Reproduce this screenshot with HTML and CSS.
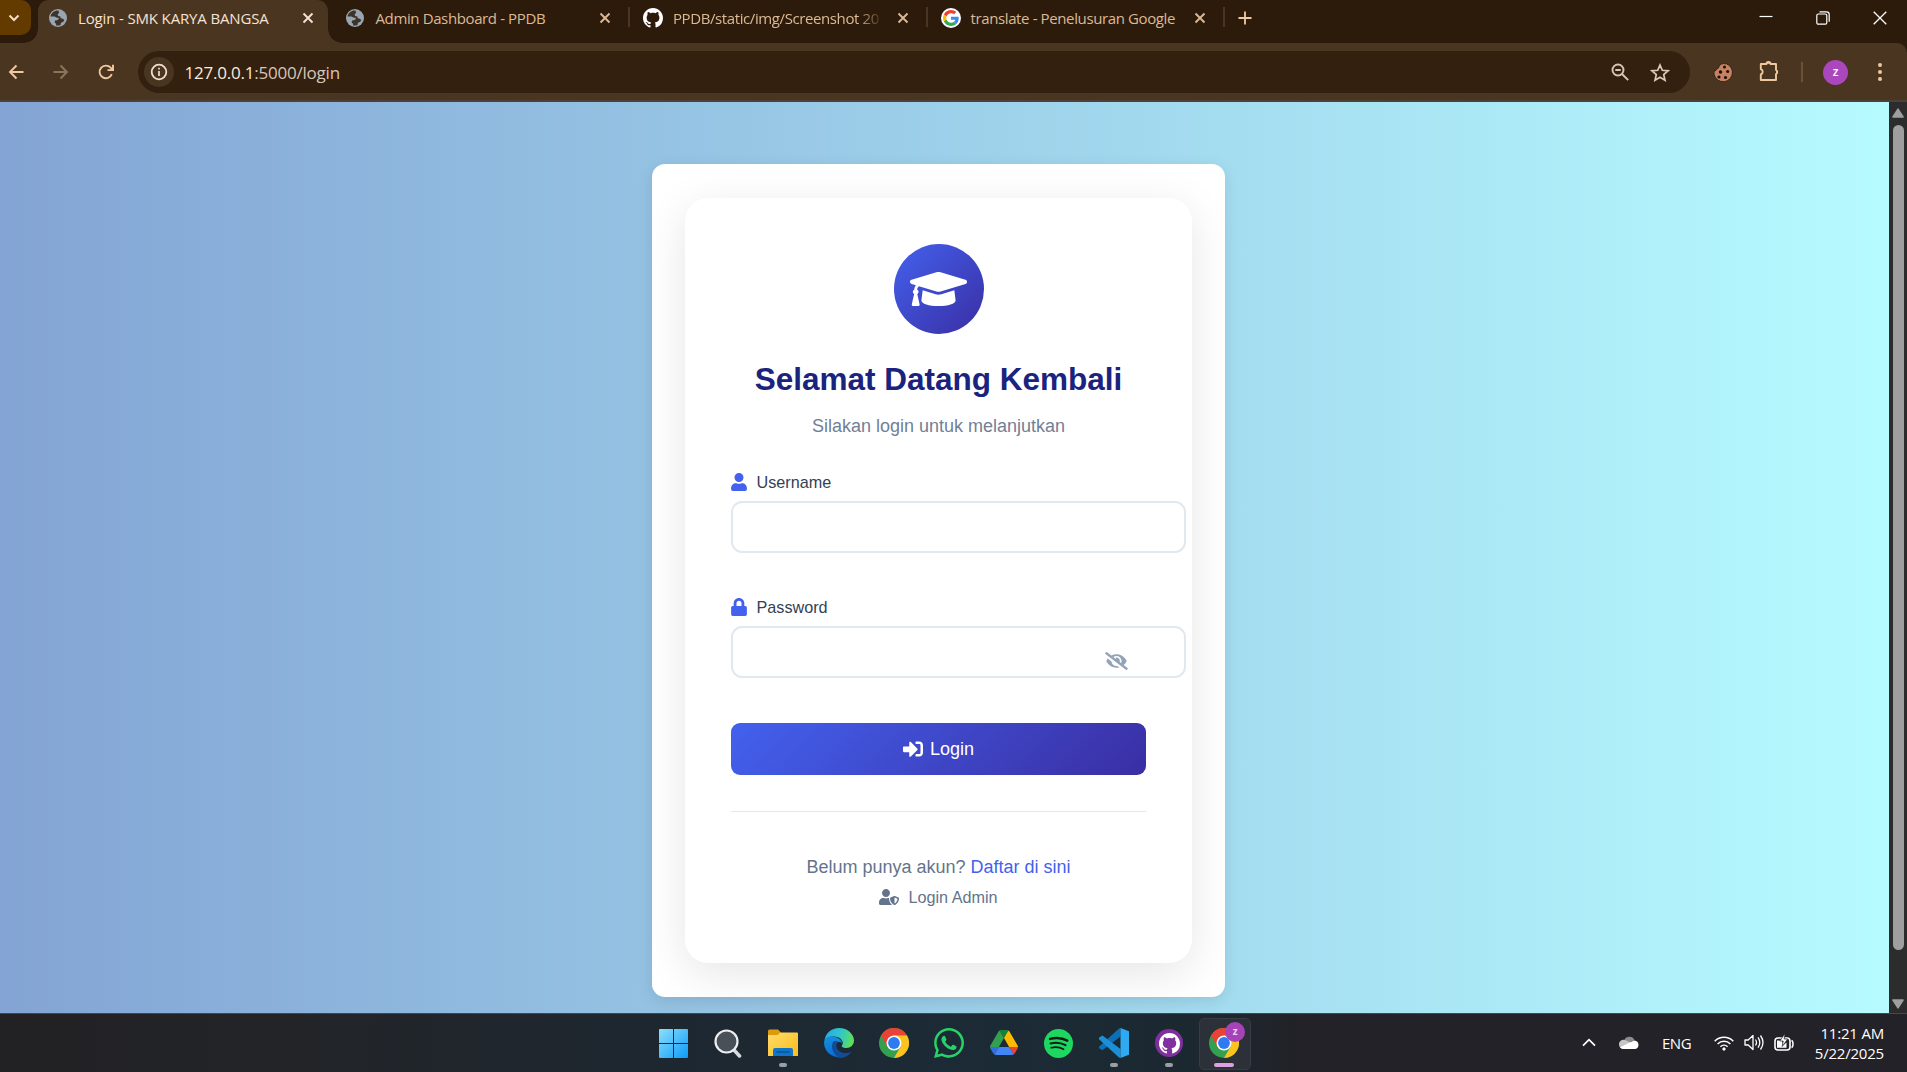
FILE: index.html
```html
<!DOCTYPE html>
<html lang="id">
<head>
<meta charset="utf-8">
<title>Login - SMK KARYA BANGSA</title>
<link rel="stylesheet" href="styles.css">
</head>
<body>
<svg class="defs" width="0" height="0" aria-hidden="true">
  <symbol id="globe" viewBox="0 0 18 18"><circle cx="9" cy="9" r="9" fill="#9aa5b3"/><path d="M9.500 1.500C5.500 1.200 2 4 1.500 7.500h4l2.300 1.200h1.700l.3 1.300-1.800 1.200-2 .3-.3 2 1.300 1.200.2 1.700c1.500.3 3 .2 4.300-.4l.5-2.200 2-.8 1.300-1.800-1.300-1.500-2.300-.5-.3-1.700-2.200-.5-.6-1.500 1.500-1.800z" fill="#3c3428"/></symbol>
  <symbol id="close" viewBox="0 0 12 12"><path d="M1.500 1.500l9 9M10.500 1.500l-9 9" fill="none" stroke="currentColor" stroke-width="1.900"/></symbol>
  <symbol id="octocat" viewBox="0 0 16 16"><path d="M8 0C3.58 0 0 3.58 0 8c0 3.54 2.29 6.53 5.47 7.59.4.07.55-.17.55-.38 0-.19-.01-.82-.01-1.49-2.01.37-2.53-.49-2.69-.94-.09-.23-.48-.94-.82-1.13-.28-.15-.68-.52-.01-.53.63-.01 1.08.58 1.23.82.72 1.21 1.87.87 2.33.66.07-.52.28-.87.51-1.07-1.78-.2-3.64-.89-3.64-3.95 0-.87.31-1.59.82-2.15-.08-.2-.36-1.02.08-2.12 0 0 .67-.21 2.2.82.64-.18 1.32-.27 2-.27s1.36.09 2 .27c1.53-1.04 2.2-.82 2.2-.82.44 1.100.16 1.920.08 2.120.51.56.82 1.270.82 2.150 0 3.070-1.870 3.750-3.650 3.950.29.25.54.73.54 1.480 0 1.070-.01 1.930-.01 2.200 0 .21.15.46.55.38A8.010 8.010 0 0 0 16 8c0-4.420-3.580-8-8-8z" fill="currentColor"/></symbol>
  <symbol id="chrome" viewBox="0 0 30 30">
    <circle cx="15" cy="15" r="15" fill="#34a04f"/>
    <path d="M2 7.500A15 15 0 0 1 28 7.500H15L8.500 18.750z" fill="#ea4335"/>
    <path d="M28 7.500A15 15 0 0 1 15 30L21.500 18.750 15 7.500z" fill="#fcc31e"/>
    <circle cx="15" cy="15" r="7.500" fill="#fff"/><circle cx="15" cy="15" r="5.900" fill="#2f7af0"/>
  </symbol>
</svg>

<header class="browser">
  <div class="tabstrip">
    <button class="tab-search"><svg width="12" height="8" viewBox="0 0 12 8"><path d="M1.500 1.500L6 6l4.500-4.500" fill="none" stroke="#f9dcc0" stroke-width="2"/></svg></button>
    <div class="tab active"><svg class="fav"><use href="#globe"/></svg><span class="title t1">Login - SMK KARYA BANGSA</span><svg class="x"><use href="#close"/></svg></div>
    <div class="tab second"><svg class="fav"><use href="#globe"/></svg><span class="title t2">Admin Dashboard - PPDB</span><svg class="x"><use href="#close"/></svg></div>
    <div class="tab"><svg class="fav big octo"><use href="#octocat"/></svg><span class="title t3">PPDB/static/img/Screenshot 20</span><svg class="x"><use href="#close"/></svg></div>
    <div class="tab"><span class="fav big google"><svg width="16" height="16" viewBox="0 0 48 48"><path fill="#EA4335" d="M24 9.500c3.540 0 6.710 1.220 9.210 3.600l6.850-6.850C35.900 2.380 30.470 0 24 0 14.620 0 6.510 5.380 2.560 13.220l7.980 6.190C12.430 13.720 17.740 9.500 24 9.500z"/><path fill="#4285F4" d="M46.980 24.550c0-1.570-.15-3.090-.38-4.550H24v9.020h12.940c-.58 2.960-2.260 5.480-4.780 7.180l7.730 6c4.510-4.180 7.090-10.360 7.090-17.650z"/><path fill="#FBBC05" d="M10.530 28.590c-.48-1.450-.76-2.990-.76-4.590s.27-3.140.76-4.590l-7.980-6.190C.92 16.460 0 20.120 0 24c0 3.880.92 7.540 2.560 10.780l7.970-6.190z"/><path fill="#34A853" d="M24 48c6.480 0 11.930-2.130 15.890-5.810l-7.730-6c-2.150 1.450-4.920 2.300-8.160 2.300-6.260 0-11.570-4.220-13.470-9.910l-7.980 6.190C6.510 42.620 14.620 48 24 48z"/></svg></span><span class="title t4">translate - Penelusuran Google</span><svg class="x"><use href="#close"/></svg></div>
    <svg class="plus" width="14" height="14" viewBox="0 0 14 14"><path d="M7 .5v13M.5 7h13" stroke="#f0c9a0" stroke-width="1.800"/></svg>
    <div class="win">
      <svg width="14" height="14" viewBox="0 0 14 14"><path d="M.5 5.500h13" stroke="#fff" stroke-width="1.200"/></svg>
      <svg width="14" height="14" viewBox="0 0 14 14" fill="none" stroke="#fff" stroke-width="1.200"><rect x=".8" y="3" width="10" height="10.200" rx="1.500"/><path d="M3.500.8h7a2.700 2.700 0 0 1 2.700 2.700v7.200"/></svg>
      <svg width="14" height="14" viewBox="0 0 14 14"><path d="M.7.700l12.600 12.600M13.300.700L.7 13.300" stroke="#fff" stroke-width="1.300"/></svg>
    </div>
  </div>
  <div class="toolbar">
    <div class="nav">
      <svg width="16" height="16" viewBox="0 0 16 16" fill="none" stroke="#f0c9a0" stroke-width="1.900"><path d="M15.500 8H2M8.500 1.500L2 8l6.500 6.500"/></svg>
      <svg width="16" height="16" viewBox="0 0 16 16" fill="none" stroke="#8d755c" stroke-width="1.900"><path d="M.5 8H14M7.500 1.500L14 8l-6.500 6.500"/></svg>
      <svg width="16" height="16" viewBox="0 0 16 16" fill="none" stroke="#f0c9a0" stroke-width="1.900"><path d="M13.800 10.200A6.300 6.300 0 1 1 12.600 3.700L14.500 5.800M15 .8v5.300H9.500"/></svg>
    </div>
    <div class="omnibox">
      <span class="info"><svg width="18" height="18" viewBox="0 0 18 18"><circle cx="9" cy="9" r="7.300" fill="none" stroke="#f0ddcd" stroke-width="1.800"/><path d="M9 8v5M9 4.800v1.800" stroke="#f0ddcd" stroke-width="1.700"/></svg></span>
      <span class="url"><b>127.0.0.1</b>:5000/login</span>
      <svg class="mag" width="18" height="18" viewBox="0 0 18 18" fill="none" stroke="#d9c7b6" stroke-width="1.900"><circle cx="7" cy="7" r="5.500"/><path d="M11 11l6.200 6.200M4.300 7h5.400"/></svg>
      <svg width="20" height="19" viewBox="0 0 20 19"><path d="M10 2l2.300 5.300 5.700.5-4.300 3.800 1.300 5.600-5-3-5 3 1.300-5.600L2 7.800l5.700-.5z" fill="none" stroke="#dccab9" stroke-width="1.700"/></svg>
    </div>
    <svg class="cookie" width="20" height="21" viewBox="0 0 20 21"><path d="M8 1.500c1 1 2 .2 3-.3 1 .8 1 .8 2.500.6A9.300 9.300 0 1 1 1 9c1.600 0 2.500-.8 2.600-2.300C5.500 6.700 6.500 5 5.800 3.600 7 3.500 8 2.900 8 1.500z" fill="#c58160" stroke="#2c1b10" stroke-width=".9"/><g fill="#19100b"><circle cx="11.500" cy="5" r="1.500"/><circle cx="7.500" cy="10" r="1.700"/><circle cx="14.700" cy="9.600" r="1.500"/><circle cx="6" cy="15" r="1.600"/><circle cx="12.500" cy="15.500" r="1.600"/></g></svg>
    <svg class="puzzle" width="21" height="22" viewBox="0 0 21 22"><path d="M2 4h5.500a2 2 0 0 1 4 0H17v6a2.200 2.200 0 0 1 0 4v6H1.800v-5.500a2.800 2.800 0 0 0 0-5.300V4z" fill="none" stroke="#efc8a0" stroke-width="1.900" stroke-linejoin="round"/><path d="M7.200 3.800a2.200 2.200 0 0 1 4.600 0zM17.200 9.800a2.300 2.300 0 0 1 0 4.400z" fill="#efc8a0"/></svg>
    <i class="bar"></i>
    <span class="avatar">z</span>
    <svg class="dots" width="4" height="18" viewBox="0 0 4 18" fill="#f0c9a0"><circle cx="2" cy="2" r="2"/><circle cx="2" cy="9" r="2"/><circle cx="2" cy="16" r="2"/></svg>
  </div>
</header>

<div class="viewport">
  <main class="page">
    <div class="shell">
      <section class="card">
        <div class="logo"><svg width="57" height="46" viewBox="0 0 640 512"><path fill="#fff" d="M622.340 153.200L343.400 67.500c-15.200-4.670-31.600-4.670-46.790 0L17.660 153.200c-23.540 7.230-23.540 38.360 0 45.590l48.630 14.940c-10.670 13.190-17.230 29.280-17.880 46.900C38.780 266.150 32 276.110 32 288c0 10.780 5.680 19.850 13.860 25.650L20.330 428.530C18.110 438.520 25.710 448 35.940 448h56.110c10.240 0 17.840-9.480 15.620-19.470L82.140 313.650C90.320 307.850 96 298.780 96 288c0-11.570-6.470-21.250-15.660-26.870.76-15.020 8.440-28.300 20.690-36.720L296.600 284.500c9.060 2.780 26.440 6.250 46.790 0l278.950-85.700c23.550-7.240 23.550-38.360 0-45.600zM352.790 315.090c-28.530 8.760-52.840 3.920-65.590 0l-145.020-44.550L128 384c0 35.350 85.960 64 192 64s192-28.650 192-64l-14.180-113.470-145.030 44.560z"/></svg></div>
        <h1>Selamat Datang Kembali</h1>
        <p class="sub">Silakan login untuk melanjutkan</p>
        <form>
          <div class="field">
            <label for="u"><svg width="16" height="18" viewBox="0 0 448 512"><path d="M224 256c70.700 0 128-57.300 128-128S294.700 0 224 0 96 57.300 96 128s57.300 128 128 128zm89.600 32h-16.700c-22.200 10.200-46.900 16-72.900 16s-50.600-5.800-72.900-16h-16.700C60.200 288 0 348.200 0 422.400V464c0 26.500 21.500 48 48 48h352c26.500 0 48-21.500 48-48v-41.600c0-74.200-60.200-134.400-134.400-134.400z"/></svg>Username</label>
            <input id="u" type="text">
          </div>
          <div class="field">
            <label for="p"><svg width="16" height="18" viewBox="0 0 448 512"><path d="M400 224h-24v-72C376 68.200 307.800 0 224 0S72 68.200 72 152v72H48c-26.500 0-48 21.500-48 48v192c0 26.500 21.500 48 48 48h352c26.500 0 48-21.500 48-48V272c0-26.500-21.500-48-48-48zm-104 0H152v-72c0-39.700 32.300-72 72-72s72 32.300 72 72v72z"/></svg>Password</label>
            <input id="p" type="password">
            <svg class="eye" width="23" height="18" viewBox="0 0 640 512"><path d="M320 400c-75.850 0-137.250-58.710-142.900-133.110L72.200 185.820c-13.790 17.300-26.480 35.590-36.720 55.590a32.350 32.350 0 0 0 0 29.190C89.710 376.410 197.070 448 320 448c26.910 0 52.870-4 77.890-10.460L346 397.390a144.130 144.130 0 0 1-26 2.610zm313.820 58.100l-110.550-85.440a331.250 331.250 0 0 0 81.250-102.070 32.350 32.350 0 0 0 0-29.190C550.290 135.590 442.930 64 320 64a308.150 308.150 0 0 0-147.320 37.700L45.460 3.370A16 16 0 0 0 23 6.180L3.370 31.450A16 16 0 0 0 6.180 53.900l588.360 454.730a16 16 0 0 0 22.460-2.810l19.640-25.270a16 16 0 0 0-2.820-22.450zm-183.720-142l-39.300-30.380A94.750 94.750 0 0 0 416 256a94.760 94.760 0 0 0-121.310-92.210A47.650 47.650 0 0 1 304 192a46.640 46.640 0 0 1-1.540 10l-73.610-56.890A142.310 142.310 0 0 1 320 112a143.920 143.920 0 0 1 144 144c0 21.630-5.290 41.790-13.900 60.110z"/></svg>
          </div>
          <button class="login" type="button"><svg width="20" height="20" viewBox="0 0 512 512"><path d="M416 448h-84c-6.600 0-12-5.400-12-12v-40c0-6.600 5.400-12 12-12h84c17.700 0 32-14.300 32-32V160c0-17.700-14.300-32-32-32h-84c-6.600 0-12-5.400-12-12V76c0-6.600 5.400-12 12-12h84c53 0 96 43 96 96v192c0 53-43 96-96 96zm-47-201L201 79c-15-15-41-4.500-41 17v96H24c-13.300 0-24 10.700-24 24v96c0 13.300 10.700 24 24 24h136v96c0 21.500 26 32 41 17l168-168c9.300-9.400 9.300-24.600 0-34z"/></svg>Login</button>
        </form>
        <footer class="links">
          <p>Belum punya akun? <a href="#">Daftar di sini</a></p>
          <a class="admin" href="#"><svg width="20" height="16" viewBox="0 0 640 512"><path d="M622.300 271.100l-115.200-45c-4.100-1.600-12.600-3.700-22.200 0l-115.200 45c-10.700 4.200-17.700 14-17.700 24.900 0 111.600 68.700 188.800 132.900 213.900 9.600 3.700 18 1.600 22.200 0C558.400 489.900 640 420.500 640 296c0-10.900-7-20.700-17.700-24.900zM496 462.400V273.300l95.500 37.300c-5.600 87.100-60.900 135.400-95.500 151.800zM224 256c70.700 0 128-57.300 128-128S294.700 0 224 0 96 57.300 96 128s57.300 128 128 128zm96 40c0-2.500.8-4.800 1.100-7.200-2.500-.1-4.900-.8-7.500-.8h-16.700c-22.200 10.200-46.900 16-72.900 16s-50.600-5.800-72.900-16h-16.700C60.200 288 0 348.200 0 422.400V464c0 26.500 21.500 48 48 48h352c6.800 0 13.300-1.500 19.200-4-54-42.900-99.200-116.700-99.200-212z"/></svg>Login Admin</a>
        </footer>
      </section>
    </div>
  </main>
  <div class="scrollbar">
    <svg width="12" height="10" viewBox="0 0 12 10"><path d="M6 1.200L11 9H1z" fill="#9f9f9f" stroke="#9f9f9f" stroke-width="1.600" stroke-linejoin="round"/></svg>
    <i class="thumb"></i>
    <svg class="down" width="12" height="10" viewBox="0 0 12 10"><path d="M6 8.800L1 1h10z" fill="#9f9f9f" stroke="#9f9f9f" stroke-width="1.600" stroke-linejoin="round"/></svg>
  </div>
</div>

<footer class="taskbar">
  <nav class="apps">
    <span class="app"><svg width="29" height="29" viewBox="0 0 29 29"><defs><linearGradient id="wn" x2="1" y2="1"><stop stop-color="#8be0fb"/><stop offset="1" stop-color="#0c9bf8"/></linearGradient></defs><path d="M1 0h13v14H0V1a1 1 0 0 1 1-1zM15 0h13a1 1 0 0 1 1 1v13H15zM0 15h14v14H1a1 1 0 0 1-1-1zM15 15h14v13a1 1 0 0 1-1 1H15z" fill="url(#wn)"/></svg></span>
    <span class="app"><svg width="28" height="29" viewBox="0 0 28 29"><path d="M20 21l5.500 6" stroke="#d5dae0" stroke-width="3.500" stroke-linecap="round"/><circle cx="12.500" cy="12.500" r="11" fill="#4a5058" stroke="#eceef0" stroke-width="2.200"/></svg></span>
    <span class="app run"><svg width="30" height="28" viewBox="0 0 30 28"><defs><linearGradient id="fd" x2="1" y2="1"><stop stop-color="#ffdc6c"/><stop offset="1" stop-color="#fbbc18"/></linearGradient></defs><path d="M0 2a1.500 1.500 0 0 1 1.500-1.500H10L13 3.500v4H0z" fill="#dd9a0c"/><path d="M0 6h9.500l3-2.500H29q1 0 1 1V27H0z" fill="url(#fd)"/><path d="M5 27v-6q0-2 2-2h16q2 0 2 2v6z" fill="#0f75c9"/><path d="M8.500 23h13" stroke="#0a4b8c" stroke-width="1.200"/></svg></span>
    <span class="app"><svg width="30" height="30" viewBox="0 0 30 30"><defs><linearGradient id="e1" x1="0" y1=".3" x2="1" y2=".5"><stop stop-color="#28a8e8"/><stop offset=".55" stop-color="#31c8c6"/><stop offset="1" stop-color="#60e055"/></linearGradient><linearGradient id="e2" x2=".3" y2="1"><stop stop-color="#1592df"/><stop offset="1" stop-color="#0a6fd0"/></linearGradient></defs><path d="M.3 13C1.500 5 7.500 0 15 0c9 0 15 6.500 15 12.500 0 4.500-3.500 7.500-7.500 7.500-3.500 0-5.500-1.200-4.500-2.800 2-2.200 0-7.700-6-8.500C6 8 1.500 10 .3 13z" fill="url(#e1)"/><path d="M0 15c0-5 5-7.500 9.500-6.500 5 .8 8.500 3.500 8.500 7-2-2.500-7-2-7 3.500 0 6 6 9.500 10 9A15 15 0 0 1 0 15z" fill="url(#e2)"/><path d="M10 13c-3.500 3-3 12 5.500 17 5 .2 9.500-2.500 12-6.500-7 3.500-14 .5-15-5-.3-2.500.8-4.500 2-5z" fill="#114c98"/></svg></span>
    <span class="app"><svg width="30" height="30"><use href="#chrome"/></svg></span>
    <span class="app"><svg width="30" height="30" viewBox="0 32 448 448"><path fill="#25d366" d="M380.900 97.100C339 55.100 283.200 32 223.900 32c-122.400 0-222 99.600-222 222 0 39.100 10.200 77.300 29.600 111L0 480l117.700-30.900c32.400 17.700 68.900 27 106.100 27h.1c122.300 0 224.100-99.600 224.100-222 0-59.300-25.200-115-67.100-157zm-157 341.600c-33.200 0-65.700-8.900-94-25.700l-6.700-4-69.800 18.300L72 359.200l-4.400-7c-18.500-29.400-28.200-63.300-28.200-98.200 0-101.700 82.800-184.500 184.600-184.500 49.300 0 95.600 19.200 130.400 54.100 34.800 34.900 56.200 81.200 56.100 130.500 0 101.800-84.900 184.600-186.600 184.600zm101.200-138.200c-5.500-2.800-32.800-16.200-37.900-18-5.100-1.900-8.800-2.800-12.500 2.800-3.700 5.600-14.300 18-17.600 21.800-3.200 3.700-6.500 4.200-12 1.400-32.600-16.300-54-29.100-75.500-66-5.700-9.800 5.700-9.100 16.300-30.300 1.800-3.700.9-6.900-.5-9.700-1.400-2.800-12.500-30.100-17.100-41.200-4.500-10.800-9.100-9.300-12.500-9.500-3.200-.2-6.900-.2-10.600-.2-3.700 0-9.700 1.400-14.800 6.900-5.100 5.600-19.400 19-19.400 46.300 0 27.300 19.900 53.700 22.600 57.400 2.800 3.700 39.100 59.700 94.800 83.800 35.200 15.200 49 16.500 66.600 13.900 10.700-1.600 32.800-13.400 37.400-26.400 4.600-13 4.600-24.100 3.200-26.400-1.300-2.500-5-3.900-10.500-6.600z"/></svg></span>
    <span class="app"><svg class="drive" width="28" height="25" viewBox="0 0 87.300 78"><path d="m6.600 66.850 3.850 6.650c.8 1.400 1.950 2.500 3.300 3.300l13.750-23.800h-27.500c0 1.550.4 3.100 1.200 4.500z" fill="#2f6fe0"/><path d="m43.650 25-13.750-23.800c-1.350.8-2.500 1.900-3.300 3.300l-25.400 44a9.060 9.060 0 0 0 -1.200 4.500h27.500z" fill="#34a04f"/><path d="m73.550 76.800c1.350-.8 2.500-1.900 3.300-3.300l1.600-2.750 7.650-13.250c.8-1.400 1.200-2.950 1.200-4.500h-27.500l5.850 11.500z" fill="#ea4335"/><path d="m43.650 25 13.750-23.800c-1.350-.8-2.900-1.200-4.500-1.200h-18.500c-1.600 0-3.150.45-4.500 1.200z" fill="#188038"/><path d="m59.800 53h-32.300l-13.750 23.800c1.350.8 2.900 1.200 4.500 1.200h50.800c1.600 0 3.150-.45 4.500-1.200z" fill="#4285f4"/><path d="m73.400 26.500-12.700-22c-.8-1.400-1.950-2.500-3.300-3.300l-13.750 23.800 16.150 28h27.450c0-1.550-.4-3.100-1.200-4.500z" fill="#ffba00"/></svg></span>
    <span class="app"><svg width="29" height="29" viewBox="0 0 24 24"><circle cx="12" cy="12" r="12" fill="#1ed760"/><g fill="none" stroke="#111c18" stroke-linecap="round"><path d="M5 8.200c4.700-1.300 10.300-.8 14.300 1.400" stroke-width="2"/><path d="M5.400 12c4.200-1.200 8.800-.6 12.400 1.400" stroke-width="1.700"/><path d="M5.900 15.500c3.600-.9 7.300-.5 10.300 1.300" stroke-width="1.400"/></g></svg></span>
    <span class="app run"><svg width="30" height="30" viewBox="0 0 30 30"><path d="M21.500 0v8.500L3.500 22.200 0 20.300v-1.600L20 .6z" fill="#0c6fb8"/><path d="M0 9.500L3.500 7.600l18 13.500V30l-1.500-.5L0 11.200z" fill="#1d8fd8"/><path d="M21.500 0L30 3.200v23.600L21.500 30z" fill="#2fa9f2"/></svg></span>
    <span class="app run"><span class="gh"><svg width="21" height="21"><use href="#octocat"/></svg></span></span>
    <span class="app current"><svg width="30" height="30"><use href="#chrome"/></svg><b class="badge">z</b></span>
  </nav>
  <div class="tray">
    <svg class="chev" width="14" height="9" viewBox="0 0 14 9"><path d="M1 7.700l6-6 6 6" fill="none" stroke="#fff" stroke-width="1.700"/></svg>
    <svg class="cloud" width="20" height="14" viewBox="0 0 20 14"><path d="M5 5a5.500 5.500 0 0 1 10.400-1L8 8z" fill="#8c8c8c"/><path d="M0 8.500A4.500 4.500 0 0 1 6.500 4.200L15 8l-9 5H4.500A4.500 4.500 0 0 1 0 8.500z" fill="#c6c6c6"/><path d="M13 5.500a4 4 0 0 1 2.600-1 4.400 4.400 0 0 1 1 8.500H4.500A4.500 4.500 0 0 1 1 11.200z" fill="#fff"/></svg>
    <span class="lang">ENG</span>
    <svg class="wifi" width="20" height="16" viewBox="0 0 20 16" fill="none" stroke="#fff" stroke-width="1.500"><path d="M.7 6.200a13 13 0 0 1 18.600 0M3.600 9a9 9 0 0 1 12.800 0M6.400 11.800a5.200 5.200 0 0 1 7.200 0"/><circle cx="10" cy="14" r="1.200" fill="#fff" stroke-width="1"/></svg>
    <svg class="spk" width="20" height="17" viewBox="0 0 20 17" fill="none" stroke="#fff" stroke-width="1.300"><path d="M1 6h3.200L9 1.500v14L4.200 11H1z" stroke-linejoin="round"/><path d="M11.500 5.500q2 3 0 6M14 3.300q3.600 5.200 0 10.400M16.500 1.500q5 7 0 14"/></svg>
    <svg class="bat" width="20" height="17" viewBox="0 0 20 17"><rect x="1" y="4" width="15" height="12" rx="3" fill="none" stroke="#fff" stroke-width="1.600"/><path d="M17.500 6.500q1.500.5 1.500 3.500t-1.500 3.500" fill="none" stroke="#fff" stroke-width="1.500"/><path d="M3 13.800V6.500h5l1 5 3.500-3v5.300z" fill="#fff"/><path d="M11 -.5L5.800 7h3.400L8.200 12.500 13.700 5H10.200z" fill="#fff" stroke="#222228" stroke-width=".7"/></svg>
    <div class="clock"><span>11:21 AM</span><span>5/22/2025</span></div>
  </div>
</footer>
</body>
</html>
```
FILE: styles.css
```css
* { box-sizing: border-box; }
body {
  margin: 0;
  width: 1907px;
  height: 1072px;
  overflow: hidden;
  display: flex;
  flex-direction: column;
  font-family: "Liberation Sans", Arial, sans-serif;
}
svg { display: block; flex: none; }
.defs { position: absolute; }

/* Browser window */
.browser {
  height: 102px;
  flex: none;
  background: #2c1b0a;
  font-family: "Open Sans", "Noto Sans", sans-serif;
}
.tabstrip { display: flex; height: 43px; }
.tab-search {
  width: 31px;
  height: 35px;
  margin: 0 7px 0 0;
  padding: 0 3px 0 0;
  border: 0;
  border-radius: 0 10px 10px 0;
  background: #633b00;
  display: flex;
  align-items: center;
  justify-content: center;
}
.tab {
  position: relative;
  width: 297.500px;
  height: 43px;
  padding: 0 18px 7px 14px;
  display: flex;
  align-items: center;
  color: #dcb995;
}
.tab::after {
  content: "";
  position: absolute;
  right: -1px;
  top: 7px;
  width: 2px;
  height: 20px;
  background: #4a3620;
}
.tab.second { width: 301px; padding-left: 18px; }
.tab.active {
  width: 290px;
  padding: 0 14px 7px 11px;
  border-radius: 11px 11px 0 0;
  background: #4a3620;
  color: #f6e2d2;
}
.tab.active::before,
.tab.active::after {
  content: "";
  position: absolute;
  top: 29px;
  width: 14px;
  height: 14px;
}
.tab.active::before { left: -14px; background: radial-gradient(circle at 0 0, transparent 13.500px, #4a3620 14px); }
.tab.active::after { right: -14px; background: radial-gradient(circle at 100% 0, transparent 13.500px, #4a3620 14px); }
.fav { width: 18px; height: 18px; margin-right: 11px; flex: none; }
.fav.big { width: 20px; height: 20px; margin-right: 10px; }
.octo { color: #fff; background: #2c1b0a; }
.google {
  display: flex;
  align-items: center;
  justify-content: center;
  border-radius: 50%;
  background: #fff;
}
.title {
  flex: none;
  font-size: 15px;
  line-height: 20px;
  white-space: nowrap;
}
.t1 { letter-spacing: -.15px; }
.t2 { letter-spacing: -.38px; margin-left: .5px; }
.t3 {
  letter-spacing: -.4px;
  -webkit-mask-image: linear-gradient(90deg, #000 184px, transparent 211px);
  mask-image: linear-gradient(90deg, #000 184px, transparent 211px);
}
.t4 { letter-spacing: -.38px; }
.x { width: 12px; height: 12px; margin-left: auto; }
.plus { margin: 11px 0 0 14px; }
.win { display: flex; gap: 43px; margin: 11px 20.500px 0 auto; }

.toolbar {
  height: 59px;
  display: flex;
  align-items: center;
  padding: 1px 25px 0 7.500px;
  border-bottom: 2px solid #4d4038;
  border-radius: 0 10px 0 0;
  background: #4a3620;
}
.nav { display: flex; gap: 29px; width: 130.500px; }
.omnibox {
  width: 1552px;
  height: 42px;
  display: flex;
  align-items: center;
  padding: 0 20px 0 6px;
  border-radius: 21px;
  background: #33200f;
}
.info {
  width: 30px;
  height: 30px;
  display: flex;
  align-items: center;
  justify-content: center;
  border-radius: 50%;
  background: #4a3620;
}
.url { margin-left: 10.500px; font-size: 17px; color: #d9c6b5; letter-spacing: -.22px; }
.url b { font-weight: 400; color: #fbeadc; }
.mag { margin: 0 21px 0 auto; }
.cookie { margin-left: 23px; }
.puzzle { margin-left: 26px; margin-bottom: 2px; }
.bar { width: 2px; height: 20px; margin: 0 20px 0 21px; background: #6b5237; }
.avatar {
  width: 25px;
  height: 25px;
  border-radius: 50%;
  background: #ab47bc;
  color: #fff;
  font-size: 12px;
  font-weight: 600;
  line-height: 23px;
  text-align: center;
}
.dots { margin-left: auto; }

/* Login page */
.viewport { display: flex; height: 911px; flex: none; }
.page {
  width: 1889px;
  padding-top: 62px;
  overflow: hidden;
  background: linear-gradient(to right, #83a4d4, #b6fbff);
}
.shell {
  width: 573px;
  height: 833px;
  margin: 0 0 0 652px;
  padding: 34px 33px;
  border-radius: 13px;
  background: #fff;
  box-shadow: 0 4px 16px rgba(0, 0, 0, .1);
}
.card {
  height: 765px;
  padding: 46px;
  border-radius: 23px;
  background: #fff;
  box-shadow: 0 11px 45px rgba(0, 0, 0, .1);
  text-align: center;
}
.logo {
  width: 90px;
  height: 90px;
  margin: 0 auto;
  display: flex;
  align-items: center;
  justify-content: center;
  border-radius: 50%;
  background: linear-gradient(135deg, #4361ee, #3a2ea3);
}
h1 {
  margin: 26px 0 0;
  font-size: 31.500px;
  line-height: 38px;
  font-weight: 700;
  color: #1a237e;
}
.sub { margin: 18px 0 0; font-size: 18px; line-height: 20px; color: #718096; }
form { margin-top: 35px; }
.field { position: relative; height: 125px; }
label {
  display: flex;
  align-items: center;
  gap: 9.500px;
  height: 22px;
  margin-bottom: 8px;
  font-size: 16.200px;
  color: #334155;
}
label svg { fill: #4361ee; }
input {
  display: block;
  width: 455px;
  height: 52px;
  border: 2px solid #e2e8f0;
  border-radius: 11px;
  background: #fff;
}
.eye { position: absolute; left: 374px; top: 56px; fill: #94a3b8; }
.login {
  width: 415px;
  height: 52px;
  margin-top: 2px;
  padding: 0;
  border: 0;
  border-radius: 9px;
  display: flex;
  align-items: center;
  justify-content: center;
  gap: 7px;
  font: 500 18px "Liberation Sans", Arial, sans-serif;
  color: #fff;
  background: linear-gradient(135deg, #4361ee, #3a2ea3);
}
.login svg { fill: #fff; }
.links { margin-top: 36px; padding-top: 45px; border-top: 1px solid #e2e8f0; color: #64748b; }
.links p { margin: 0; font-size: 18px; line-height: 20px; }
.links a { color: #4361ee; text-decoration: none; }
.links .admin {
  display: flex;
  align-items: center;
  justify-content: center;
  gap: 9px;
  margin-top: 10px;
  font-size: 16.200px;
  line-height: 20px;
  color: #64748b;
}
.admin svg { fill: #64748b; }
.scrollbar {
  width: 18px;
  display: flex;
  flex-direction: column;
  align-items: center;
  padding: 6px 0 4px;
  background: #2c2c2c;
}
.thumb { width: 11px; height: 825px; margin-top: 7px; border-radius: 6px; background: #9f9f9f; }
.down { margin-top: auto; }

/* Taskbar */
.taskbar {
  height: 59px;
  flex: none;
  display: flex;
  align-items: flex-start;
  border-top: 1px solid #41484f;
  background: linear-gradient(90deg, #222225 0, #222428 300px, #1e2730 640px, #1b2b36 1000px, #1c2830 1190px, #222228 1300px, #222228 100%);
  color: #fff;
  font-family: "Open Sans", "Noto Sans", sans-serif;
}
.apps { display: flex; margin-left: 645.700px; }
.app {
  position: relative;
  width: 55.100px;
  height: 58px;
  display: flex;
  align-items: center;
  justify-content: center;
}
.drive { margin-bottom: 1px; }
.run::after, .current::after {
  content: "";
  position: absolute;
  left: 50%;
  bottom: 5px;
  width: 8px;
  height: 4px;
  margin-left: -4px;
  border-radius: 2px;
  background: #9a9fa4;
}
.current::after { width: 20px; margin-left: -10px; background: #dc9fe0; }
.current::before {
  content: "";
  position: absolute;
  left: 2.500px;
  top: 4px;
  width: 50px;
  height: 50px;
  border: 1px solid #373c45;
  border-radius: 5px;
  background: #2c3039;
}
.current svg { position: relative; }
.badge {
  position: absolute;
  left: 28.500px;
  top: 8px;
  width: 20px;
  height: 20px;
  border-radius: 50%;
  background: #a643b8;
  color: #ead3ef;
  font-size: 10px;
  line-height: 19px;
  text-align: center;
}
.gh {
  width: 28px;
  height: 28px;
  display: flex;
  align-items: center;
  justify-content: center;
  border-radius: 50%;
  background: #7f2f9e;
  color: #fff;
}
.tray { display: flex; align-items: center; height: 58px; margin-left: auto; padding: 0 23px 1px 0; }
.cloud { margin-left: 23px; }
.lang { width: 29px; margin: 0 23px; font-size: 15px; letter-spacing: -.5px; white-space: nowrap; }
.spk { margin-left: 10px; }
.bat { margin-left: 10px; }
.clock {
  display: flex;
  flex-direction: column;
  align-items: flex-end;
  width: 90px;
  font-size: 15px;
  line-height: 20px;
  letter-spacing: -.2px;
}
```
